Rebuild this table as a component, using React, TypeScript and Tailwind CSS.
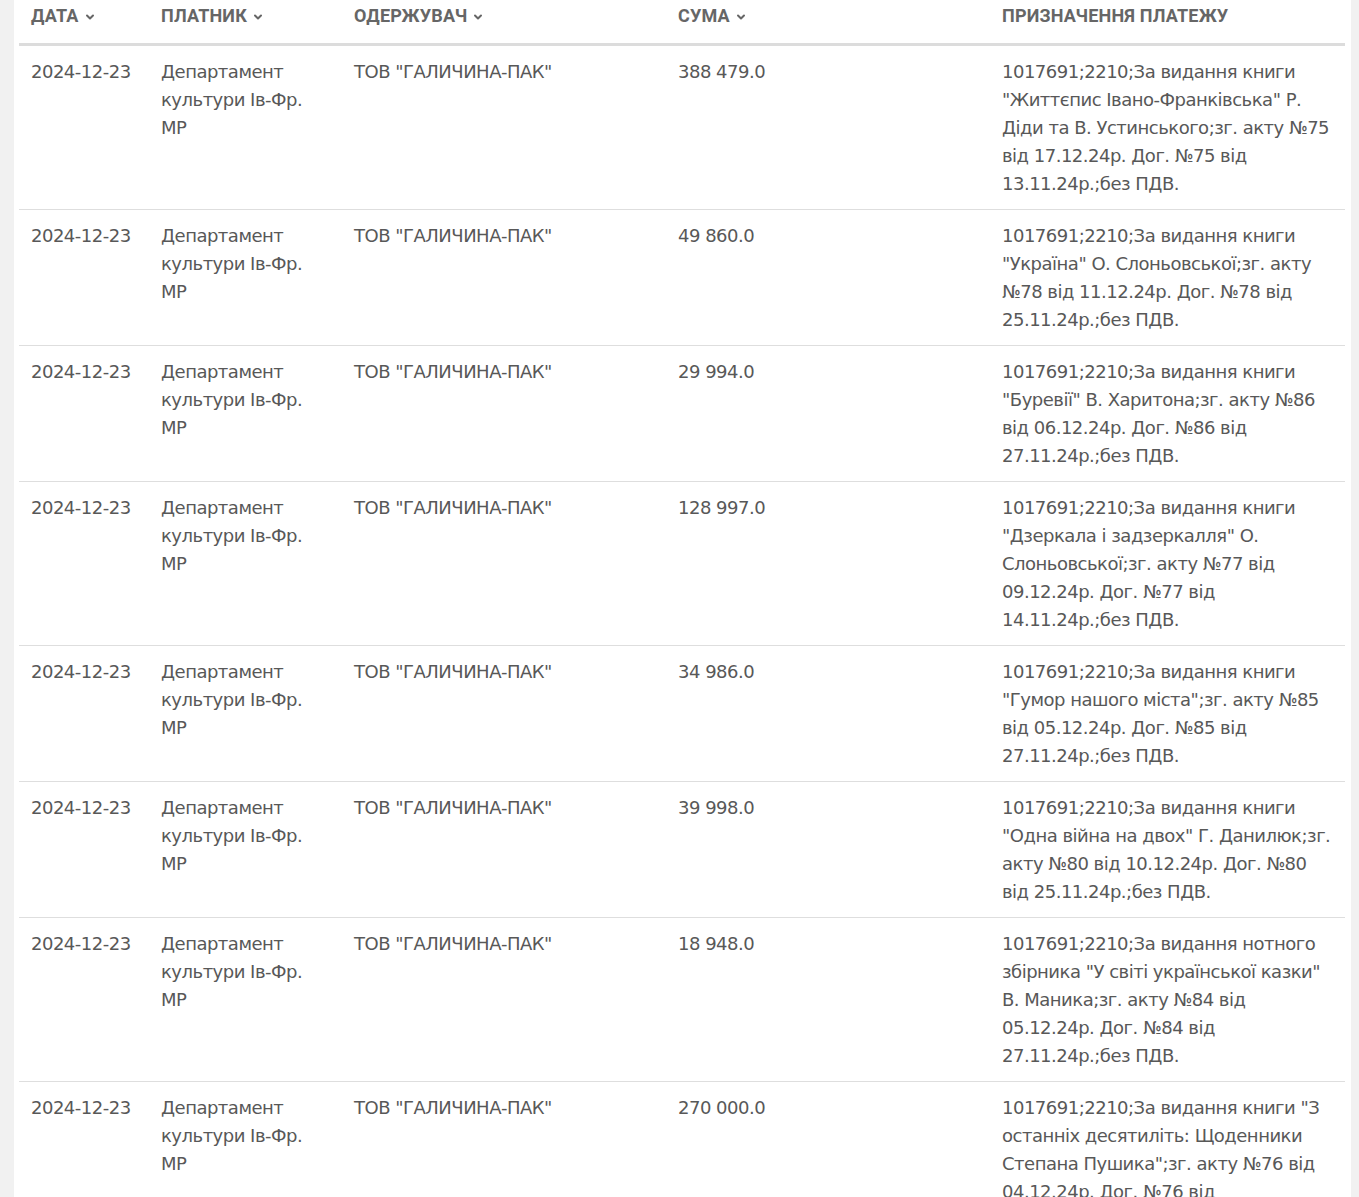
import { ChevronDown } from "lucide-react";

type Row = {
  date: string;
  payer: string;
  receiver: string;
  sum: string;
  purpose: string;
};

const rows: Row[] = [
  {
    date: "2024-12-23",
    payer: "Департамент культури Ів-Фр. МР",
    receiver: 'ТОВ "ГАЛИЧИНА-ПАК"',
    sum: "388 479.0",
    purpose:
      '1017691;2210;За видання книги "Життєпис Івано-Франківська" Р. Діди та В. Устинського;зг. акту №75 від 17.12.24р. Дог. №75 від 13.11.24р.;без ПДВ.',
  },
  {
    date: "2024-12-23",
    payer: "Департамент культури Ів-Фр. МР",
    receiver: 'ТОВ "ГАЛИЧИНА-ПАК"',
    sum: "49 860.0",
    purpose:
      '1017691;2210;За видання книги "Україна" О. Слоньовської;зг. акту №78 від 11.12.24р. Дог. №78 від 25.11.24р.;без ПДВ.',
  },
  {
    date: "2024-12-23",
    payer: "Департамент культури Ів-Фр. МР",
    receiver: 'ТОВ "ГАЛИЧИНА-ПАК"',
    sum: "29 994.0",
    purpose:
      '1017691;2210;За видання книги "Буревії" В. Харитона;зг. акту №86 від 06.12.24р. Дог. №86 від 27.11.24р.;без ПДВ.',
  },
  {
    date: "2024-12-23",
    payer: "Департамент культури Ів-Фр. МР",
    receiver: 'ТОВ "ГАЛИЧИНА-ПАК"',
    sum: "128 997.0",
    purpose:
      '1017691;2210;За видання книги "Дзеркала і задзеркалля" О. Слоньовської;зг. акту №77 від 09.12.24р. Дог. №77 від 14.11.24р.;без ПДВ.',
  },
  {
    date: "2024-12-23",
    payer: "Департамент культури Ів-Фр. МР",
    receiver: 'ТОВ "ГАЛИЧИНА-ПАК"',
    sum: "34 986.0",
    purpose:
      '1017691;2210;За видання книги "Гумор нашого міста";зг. акту №85 від 05.12.24р. Дог. №85 від 27.11.24р.;без ПДВ.',
  },
  {
    date: "2024-12-23",
    payer: "Департамент культури Ів-Фр. МР",
    receiver: 'ТОВ "ГАЛИЧИНА-ПАК"',
    sum: "39 998.0",
    purpose:
      '1017691;2210;За видання книги "Одна війна на двох" Г. Данилюк;зг. акту №80 від 10.12.24р. Дог. №80 від 25.11.24р.;без ПДВ.',
  },
  {
    date: "2024-12-23",
    payer: "Департамент культури Ів-Фр. МР",
    receiver: 'ТОВ "ГАЛИЧИНА-ПАК"',
    sum: "18 948.0",
    purpose:
      '1017691;2210;За видання нотного збірника "У світі української казки" В. Маника;зг. акту №84 від 05.12.24р. Дог. №84 від 27.11.24р.;без ПДВ.',
  },
  {
    date: "2024-12-23",
    payer: "Департамент культури Ів-Фр. МР",
    receiver: 'ТОВ "ГАЛИЧИНА-ПАК"',
    sum: "270 000.0",
    purpose:
      '1017691;2210;За видання книги "З останніх десятиліть: Щоденники Степана Пушика";зг. акту №76 від 04.12.24р. Дог. №76 від 27.11.24р.;без ПДВ.',
  },
];

const cols = "grid grid-cols-[130px_193px_324px_324px_1fr]";

function HeadCell({ label, sort = true }: { label: string; sort?: boolean }) {
  return (
    <div className="flex items-center gap-[5px] px-3 pt-[4px] pb-[15px]">
      <span className="text-[18px] leading-6 font-bold uppercase tracking-[0.01em]">{label}</span>
      {sort && <ChevronDown size={12} strokeWidth={4} className="mt-px" />}
    </div>
  );
}

export default function App() {
  return (
    <div
      className="h-[1197px] overflow-hidden bg-[#f1f1f1] pl-[14px] pr-2"
      style={{ fontFamily: '"DejaVu Sans", "Noto Sans", sans-serif' }}
    >
      <div className="h-full bg-white pl-[5px] pr-[6px]">
        {/* header */}
        <div className={`${cols} border-b-[3px] border-[#dcdcdc] text-[#666]`}
          style={{ fontFamily: '"Roboto", "Noto Sans", sans-serif' }}>
          <HeadCell label="Дата" />
          <HeadCell label="Платник" />
          <HeadCell label="Одержувач" />
          <HeadCell label="Сума" />
          <HeadCell label="Призначення платежу" sort={false} />
        </div>

        {rows.map((r, i) => (
          <div key={i} className={`${cols} border-b border-[#dedede] text-[18px] leading-7 tracking-[-0.5px] text-[#585858]`}>
            <div className="px-3 pt-3 pb-[11px]">{r.date}</div>
            <div className="px-3 pt-3 pb-[11px]">{r.payer}</div>
            <div className="px-3 pt-3 pb-[11px]">{r.receiver}</div>
            <div className="px-3 pt-3 pb-[11px]">{r.sum}</div>
            <div className="px-3 pt-3 pb-[11px]">{r.purpose}</div>
          </div>
        ))}
      </div>
    </div>
  );
}
